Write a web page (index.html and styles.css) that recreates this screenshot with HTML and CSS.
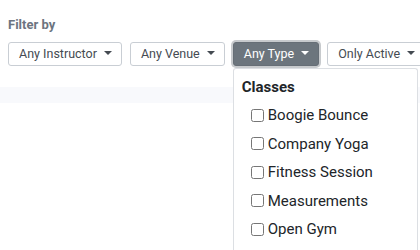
FILE: index.html
```html
<!DOCTYPE html>
<html lang="en">
<head>
  <meta charset="UTF-8">
  <title>Schedule filters</title>
  <meta name="viewport" content="width=device-width, initial-scale=1.0">
  <link rel="stylesheet" href="styles.css">
</head>
<body>

  <div class="filters">
    <div class="filter-label">Filter by</div>
    <div class="filter-row">
      <button class="filter-btn">Any Instructor</button>
      <button class="filter-btn">Any Venue</button>
      <div class="dropdown">
        <button class="filter-btn active">Any Type</button>
        <div class="dropdown-menu">
          <div class="menu-header">Classes</div>
          <label class="menu-item"><input type="checkbox"> Boogie Bounce</label>
          <label class="menu-item"><input type="checkbox"> Company Yoga</label>
          <label class="menu-item"><input type="checkbox"> Fitness Session</label>
          <label class="menu-item"><input type="checkbox"> Measurements</label>
          <label class="menu-item"><input type="checkbox"> Open Gym</label>
        </div>
      </div>
      <button class="filter-btn">Only Active</button>
    </div>
  </div>

  <div class="band"></div>

</body>
</html>
```

FILE: styles.css
```css
html {
  height: 100%;
}
body {
  font-family: 'Roboto', 'Liberation Sans', sans-serif;
  background: #fff;
  color: #212529;
  margin: 0;
  min-height: 100%;
  overflow: hidden;
}
.filters {
  padding: 17px 8px 0;
}
.filter-label {
  font-size: 13px;
  font-weight: bold;
  line-height: 15px;
  color: #6c7480;
  margin-bottom: 10px;
}
.filter-row {
  display: flex;
  gap: 8px;
}
.filter-btn {
  flex-shrink: 0;
  font-family: inherit;
  font-size: 12.5px;
  line-height: 16px;
  padding: 3px 9px 3px 10px;
  color: #454b52;
  background: #fff;
  border: 1px solid #c9ced4;
  border-radius: 3px;
  white-space: nowrap;
}
.filter-btn::after {
  content: "";
  display: inline-block;
  margin-left: 7px;
  vertical-align: 3px;
  border-top: 4px solid;
  border-left: 4px solid transparent;
  border-right: 4px solid transparent;
}
.filter-btn.active {
  background: #6c757d;
  border-color: #666e76;
  color: #fff;
  box-shadow: 0 0 0 2px rgba(130, 138, 145, 0.45);
}
.dropdown {
  position: relative;
}
.dropdown-menu {
  position: absolute;
  top: 26px;
  left: 0;
  width: 183px;
  height: 180px;
  background: #fff;
  border: 1px solid #dcdfe3;
  border-bottom: none;
  border-radius: 3px 3px 0 0;
  padding: 6px 0 0;
  z-index: 2;
}
.menu-header {
  font-size: 15px;
  font-weight: bold;
  line-height: 20px;
  padding: 2px 8px 4px;
}
.menu-item {
  display: flex;
  align-items: center;
  height: 28.5px;
  padding-left: 13px;
  font-size: 15px;
}
.menu-item input {
  margin: 0 4px 0 4px;
  width: 13px;
  height: 13px;
}
.band {
  margin-top: 21px;
  height: 16px;
  background: #f8f9fc;
}
```
